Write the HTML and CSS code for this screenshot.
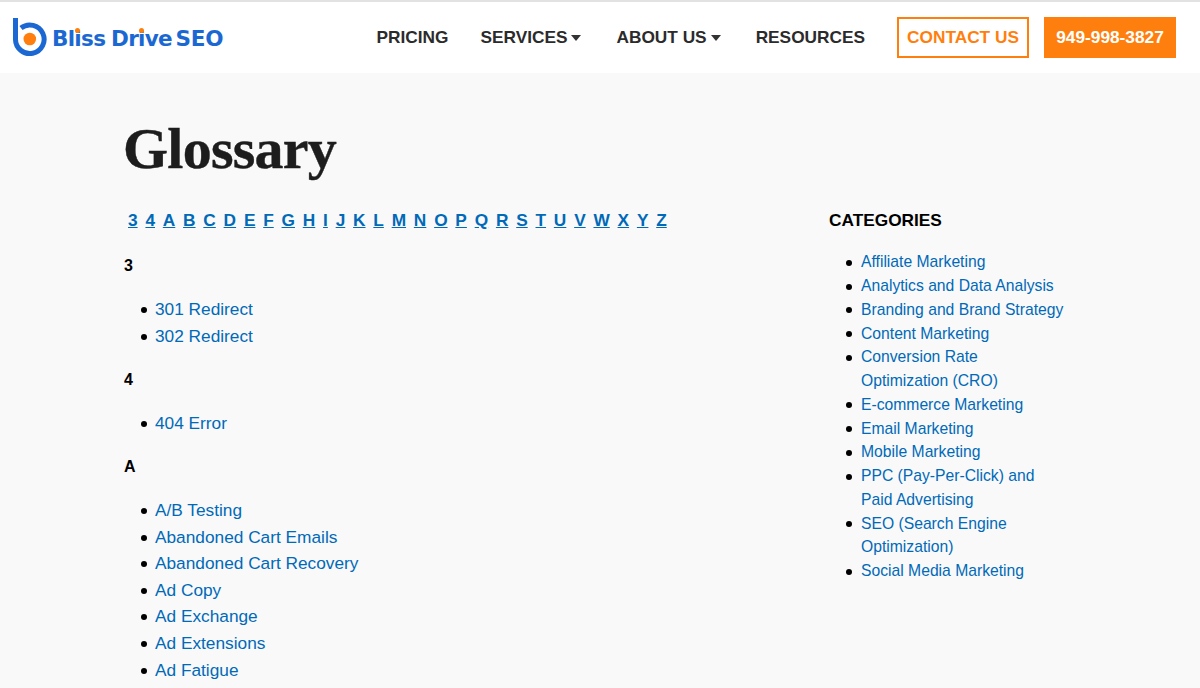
FILE: index.html
```html
<!DOCTYPE html>
<html lang="en">
<head>
<meta charset="utf-8">
<title>Glossary - Bliss Drive SEO</title>
<link rel="stylesheet" href="styles.css">
</head>
<body>
<header class="site-header">
  <a class="logo" href="#">
    <svg class="logo-mark" width="34" height="40" viewBox="0 0 34 40" aria-hidden="true">
      <path d="M2.500 0V21A14.300 14.300 0 1 0 8 10" fill="none" stroke="#1c68d3" stroke-width="5"/>
      <circle cx="16.800" cy="21" r="6.300" fill="#ff7f0e"/>
    </svg>
    <span class="logo-text">Bl<span class="i-dot">i</span>ss Dr<span class="i-dot">i</span>ve<span class="seo">SEO</span></span>
  </a>
  <nav class="main-nav">
    <a href="#">PRICING</a>
    <a href="#">SERVICES<i class="caret"></i></a>
    <a href="#">ABOUT US<i class="caret"></i></a>
    <a href="#">RESOURCES</a>
  </nav>
  <a class="btn btn-outline" href="#">CONTACT US</a>
  <a class="btn btn-solid" href="#">949-998-3827</a>
</header>
<div class="page">
  <main class="content">
    <h1>Glossary</h1>
    <div class="alpha">
      <a href="#">3</a><a href="#">4</a><a href="#">A</a><a href="#">B</a><a href="#">C</a><a href="#">D</a><a href="#">E</a><a href="#">F</a><a href="#">G</a><a href="#">H</a><a href="#">I</a><a href="#">J</a><a href="#">K</a><a href="#">L</a><a href="#">M</a><a href="#">N</a><a href="#">O</a><a href="#">P</a><a href="#">Q</a><a href="#">R</a><a href="#">S</a><a href="#">T</a><a href="#">U</a><a href="#">V</a><a href="#">W</a><a href="#">X</a><a href="#">Y</a><a href="#">Z</a>
    </div>
    <h2>3</h2>
    <ul class="terms">
      <li><a href="#">301 Redirect</a></li>
      <li><a href="#">302 Redirect</a></li>
    </ul>
    <h2>4</h2>
    <ul class="terms">
      <li><a href="#">404 Error</a></li>
    </ul>
    <h2>A</h2>
    <ul class="terms">
      <li><a href="#">A/B Testing</a></li>
      <li><a href="#">Abandoned Cart Emails</a></li>
      <li><a href="#">Abandoned Cart Recovery</a></li>
      <li><a href="#">Ad Copy</a></li>
      <li><a href="#">Ad Exchange</a></li>
      <li><a href="#">Ad Extensions</a></li>
      <li><a href="#">Ad Fatigue</a></li>
    </ul>
  </main>
  <aside class="sidebar">
    <h3>CATEGORIES</h3>
    <ul class="cats">
      <li><a href="#">Affiliate Marketing</a></li>
      <li><a href="#">Analytics and Data Analysis</a></li>
      <li><a href="#">Branding and Brand Strategy</a></li>
      <li><a href="#">Content Marketing</a></li>
      <li><a href="#">Conversion Rate Optimization (CRO)</a></li>
      <li><a href="#">E-commerce Marketing</a></li>
      <li><a href="#">Email Marketing</a></li>
      <li><a href="#">Mobile Marketing</a></li>
      <li><a href="#">PPC (Pay-Per-Click) and Paid Advertising</a></li>
      <li><a href="#">SEO (Search Engine Optimization)</a></li>
      <li><a href="#">Social Media Marketing</a></li>
    </ul>
  </aside>
</div>
</body>
</html>
```
FILE: styles.css
```css
* { box-sizing: border-box; }
html, body { margin: 0; height: 100%; overflow: hidden; }
body {
  background: #f9f9f9;
  font-family: "Liberation Sans", Arial, sans-serif;
  color: #000;
}
a { color: #0069b8; text-decoration: none; }

.site-header {
  height: 73px;
  background: #fff;
  border-top: 2px solid #e2e2e2;
  display: flex;
  align-items: center;
  padding: 0 24px 0 13px;
}
.logo { display: flex; align-items: center; gap: 5px; margin-right: auto; }
.logo-mark { display: block; }
.logo-text {
  font-family: "DejaVu Sans", sans-serif;
  font-weight: 700;
  font-size: 21.500px;
  letter-spacing: -0.7px;
  word-spacing: -1px;
  color: #1c68d3;
  line-height: 24px;
  margin-top: 3px;
  white-space: nowrap;
}
.seo { margin-left: 3.500px; letter-spacing: -0.2px; }
.i-dot { position: relative; }
.i-dot::after {
  content: "";
  position: absolute;
  left: 1px;
  top: 2px;
  width: 5px;
  height: 5px;
  border-radius: 50%;
  background: #ff7f0e;
}
.main-nav { display: flex; gap: 32px; margin-right: 32px; }
.main-nav a {
  color: #2b2b2b;
  font-size: 17.280px;
  font-weight: 700;
  display: flex;
  align-items: center;
}
.caret {
  display: block;
  margin: 1px 3px 0 4px;
  border-left: 5.500px solid transparent;
  border-right: 5.500px solid transparent;
  border-top: 6px solid #333;
}
.btn {
  height: 41px;
  display: flex;
  align-items: center;
  justify-content: center;
  font-size: 17.280px;
  font-weight: 700;
}
.btn-outline {
  width: 132px;
  border: 2px solid #ff7f0e;
  color: #ff7f0e;
  margin-right: 15px;
}
.btn-solid { width: 132px; background: #ff7f0e; color: #fff; }

.page {
  display: flex;
  padding: 0 0 0 124px;
}
.content { width: 705px; flex: none; }
h1 {
  font-family: "Liberation Serif", serif;
  font-size: 58px;
  font-weight: 700;
  letter-spacing: -0.75px;
  line-height: 66px;
  margin: 43px 0 0 -1px;
  color: #1d1d1d;
  -webkit-text-stroke: 0.4px #1d1d1d;
}
.alpha {
  display: flex;
  gap: 7.800px;
  margin: 27px 0 25px 4px;
  font-size: 17.280px;
  line-height: 22px;
  font-weight: 700;
}
.alpha a { text-decoration: underline; }
h2 {
  font-size: 16px;
  font-weight: 700;
  line-height: 20px;
  margin: 20.600px 0 0;
}
.alpha + h2 { margin-top: 0; }
.terms, .cats { list-style: none; padding: 0; }
.terms li, .cats li { display: flex; }
.terms li::before, .cats li::before {
  content: "";
  flex: none;
  width: 6px;
  height: 6px;
  border-radius: 50%;
  background: #000;
}
.terms {
  margin: 20px 0 0;
  font-size: 17.280px;
  line-height: 26.600px;
}
.terms li::before { margin: 11px 8.500px 0 16.500px; }
.sidebar { width: 240px; padding-top: 135px; }
h3 { font-size: 17.280px; font-weight: 700; line-height: 24px; margin: 0; }
.cats {
  margin: 18.450px 0 0;
  font-size: 15.700px;
  line-height: 23.750px;
}
.cats li::before { margin: 9.500px 9px 0 17px; }
```
